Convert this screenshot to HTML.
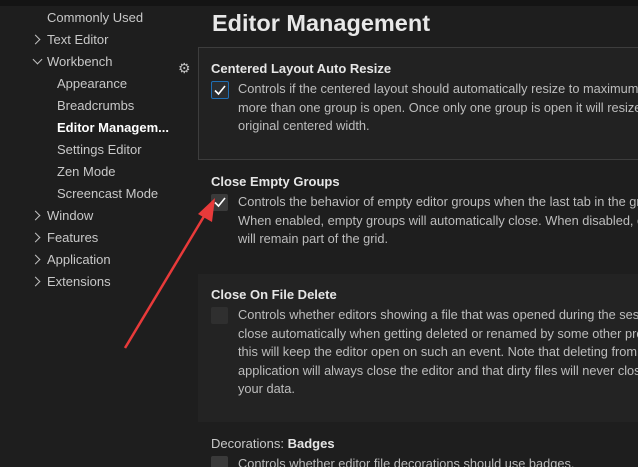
<!DOCTYPE html><html style="overflow:hidden;width:638px;height:467px"><head><style>
body{margin:0;width:638px;height:467px;background:#1e1e1e;overflow:hidden;position:relative;font-family:"Liberation Sans",sans-serif;color:#ccc}
.a{position:absolute;white-space:nowrap}
.s{font-size:13px;color:#c8c8c8}
.chev{position:absolute;width:6px;height:6px;border-right:1.3px solid #c0c0c0;border-top:1.3px solid #c0c0c0;transform:rotate(45deg)}
.t{font-size:13px;font-weight:bold;color:#e6e6e6}
.d{font-size:12.8px;line-height:18.5px;color:#bdbdbd}
.cb{position:absolute;width:17px;height:17px;background:#3a3a3a;border-radius:2px}
.wrap{position:absolute;left:0;top:0;width:638px;height:467px;overflow:hidden}
</style></head><body><div class="wrap">
<div class="a" style="left:0;top:0;width:638px;height:6px;background:#141414"></div>
<div class="a s" style="left:47px;top:10px">Commonly Used</div>
<div class="chev" style="left:32px;top:36px"></div><div class="a s" style="left:47px;top:32px">Text Editor</div>
<div class="chev" style="left:34px;top:56px;transform:rotate(135deg)"></div><div class="a s" style="left:47px;top:54px">Workbench</div>
<div class="a s" style="left:57px;top:76px">Appearance</div>
<div class="a s" style="left:57px;top:98px">Breadcrumbs</div>
<div class="a s" style="left:57px;top:120px;font-weight:bold;color:#fff">Editor Managem...</div>
<div class="a s" style="left:57px;top:142px">Settings Editor</div>
<div class="a s" style="left:57px;top:164px">Zen Mode</div>
<div class="a s" style="left:57px;top:186px">Screencast Mode</div>
<div class="chev" style="left:32px;top:212px"></div><div class="a s" style="left:47px;top:208px">Window</div>
<div class="chev" style="left:32px;top:234px"></div><div class="a s" style="left:47px;top:230px">Features</div>
<div class="chev" style="left:32px;top:256px"></div><div class="a s" style="left:47px;top:252px">Application</div>
<div class="chev" style="left:32px;top:278px"></div><div class="a s" style="left:47px;top:274px">Extensions</div>
<div class="a" style="left:178px;top:60px;font-size:14px;color:#c0c0c0">⚙</div>
<div class="a" style="left:212px;top:10px;font-size:23.5px;font-weight:bold;color:#e8e8e8">Editor Management</div>
<div class="a" style="left:198px;top:47px;width:450px;height:111px;border:1px solid #3d3d3d;background:#222"></div>
<div class="a t" style="left:211px;top:61px">Centered Layout Auto Resize</div>
<div class="cb" style="left:211px;top:81px;border:1px solid #1f6fb5;background:#2a2d30;width:16px;height:16px"></div>
<svg class="a" style="left:211px;top:81px" width="18" height="18"><path d="M4 9.5 L7.5 13 L14 5" stroke="#fff" stroke-width="1.6" fill="none"/></svg>
<div class="a d" style="left:238px;top:80px">Controls if the centered layout should automatically resize to maximum width when<br>more than one group is open. Once only one group is open it will resize back to the<br>original centered width.</div>
<div class="a t" style="left:211px;top:174px">Close Empty Groups</div>
<div class="cb" style="left:211px;top:194px"></div>
<svg class="a" style="left:211px;top:193px" width="18" height="18"><path d="M4 9.5 L7.5 13 L14 5" stroke="#fff" stroke-width="1.6" fill="none"/></svg>
<div class="a d" style="left:238px;top:193px">Controls the behavior of empty editor groups when the last tab in the group is closed.<br>When enabled, empty groups will automatically close. When disabled, empty groups<br>will remain part of the grid.</div>
<div class="a" style="left:198px;top:274px;width:450px;height:148px;background:#232323"></div>
<div class="a t" style="left:211px;top:287px">Close On File Delete</div>
<div class="cb" style="left:211px;top:307px;background:#2f2f2f"></div>
<div class="a d" style="left:238px;top:306px">Controls whether editors showing a file that was opened during the session should<br>close automatically when getting deleted or renamed by some other process. Disabling<br>this will keep the editor open on such an event. Note that deleting from within the<br>application will always close the editor and that dirty files will never close to preserve<br>your data.</div>
<div class="a t" style="left:211px;top:436px"><span style="font-weight:normal;color:#c8c8c8">Decorations: </span>Badges</div>
<div class="cb" style="left:211px;top:456px"></div>
<div class="a d" style="left:238px;top:455px">Controls whether editor file decorations should use badges.</div>
<svg class="a" style="left:0;top:0" width="638" height="467"><line x1="125" y1="348" x2="206" y2="213" stroke="#e83a3a" stroke-width="2.5"/><polygon points="215,198 198,214 212,222" fill="#e83a3a"/></svg>
</div></body></html>
